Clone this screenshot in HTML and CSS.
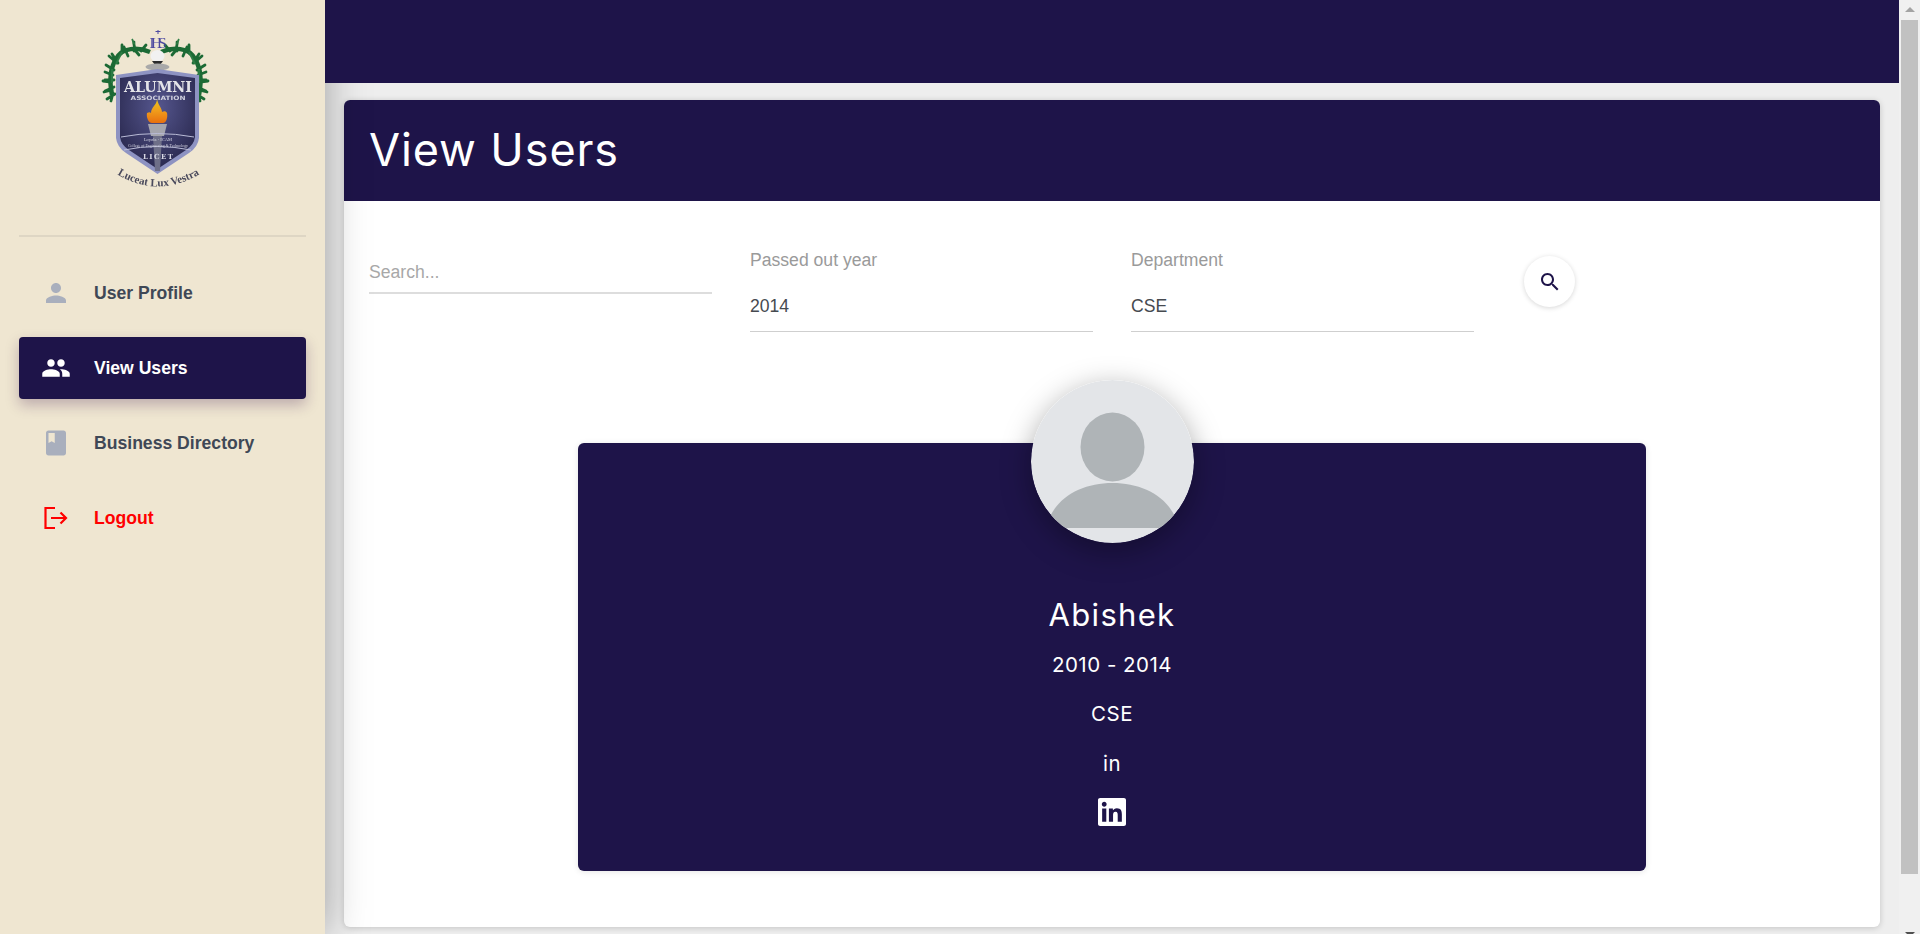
FILE: index.html
```html
<!DOCTYPE html>
<html lang="en">
<head>
  <meta charset="UTF-8" />
  <meta name="viewport" content="width=device-width, initial-scale=1.0"/>
  <title>View Users</title>
  <link rel="stylesheet" href="styles.css">
</head>
<body>
  <div class="app">
    <!-- Sidebar -->
    <aside class="sidebar">
      <div class="logo">
        <svg class="logoImg" viewBox="0 0 130 170" width="130" height="170" role="img" aria-label="Alumni Association">
          <defs>
            <radialGradient id="shieldFill" cx="50%" cy="35%" r="65%">
              <stop offset="0" stop-color="#55568e"/>
              <stop offset="1" stop-color="#2a294f"/>
            </radialGradient>
            <linearGradient id="flameFill" x1="0" y1="0" x2="0" y2="1">
              <stop offset="0" stop-color="#e9c61c"/>
              <stop offset=".45" stop-color="#f0a01c"/>
              <stop offset="1" stop-color="#e8700f"/>
            </linearGradient>
            <g id="branch">
              <path d="M58 27C46 22 30 22 24 34C19 42 17 55 20 70" fill="none" stroke="#1c6a35" stroke-width="4.500"/>
              <path d="M54 20l-5 6M47 30l-5-6M42 17c-1 3 2 5 0 9M36 31l-4-9M30 20l0 8M26 38l-6-9M17 31l8 7M22 45l-8-5M13 47l8 3M22 55l-9 0M11 56l8 1M22 62l-9 4M12 67l8-2M23 69l-8 5M19 76l2-8" fill="none" stroke="#1c6a35" stroke-width="2.800" stroke-linecap="round"/>
              <path d="M40 14c2 3 0 4 3 5M30 27l-6 12M20 44l0 14" fill="none" stroke="#2e7d45" stroke-width="1.800"/>
            </g>
          </defs>
          <use href="#branch" transform="translate(2 0)"/>
          <use href="#branch" transform="translate(129 0) scale(-1 1)"/>
          <text class="logoIhs" x="68" y="23" text-anchor="middle" textLength="17">IHS</text>
          <path d="M68 5v4M65.500 6.500h5" fill="none" stroke="#4d4aa0" stroke-width="1"/>
          <ellipse cx="67.500" cy="31" rx="7" ry="6" fill="#f1f1f1"/>
          <path d="M62 36h11l-3 4h-5z" fill="#2a2a2a"/>
          <ellipse cx="67.500" cy="42" rx="12" ry="3.500" fill="#a9a9a9"/>
          <path d="M26 50L67.500 44L109 50V113Q108 122 99 128L67.500 149L36 128Q27 122 26 113Z" fill="#8e93c2"/>
          <path d="M30 53L67.500 48L105 53V112Q104 120 96 125L67.500 144L39 125Q31 120 30 112Z" fill="url(#shieldFill)"/>
          <text class="logoTitle" x="68" y="67" text-anchor="middle" textLength="68" lengthAdjust="spacingAndGlyphs">ALUMNI</text>
          <text class="logoSub" x="68" y="74.500" text-anchor="middle" textLength="55" lengthAdjust="spacingAndGlyphs">ASSOCIATION</text>
          <path d="M67 74c1 6 5 9 5 13c2-1 4-1 5 1c1 5-1 10-4 10h-11c-3 0-6-5-5-10c2-1 3-1 4 0c0-6 6-8 6-14z" fill="url(#flameFill)"/>
          <path d="M58 99H77L74 111H61Z" fill="#a5a5ad"/>
          <path d="M63 111H72L70 146H65Z" fill="#6e6f88"/>
          <path d="M31 112Q67 105 104 112M34 125Q67 118 101 125" fill="none" stroke="#b9bbd6" stroke-width="1"/>
          <text class="logoBand" x="68" y="116" text-anchor="middle">Loyola - ICAM</text>
          <text class="logoTiny" x="68" y="122" text-anchor="middle" textLength="60" lengthAdjust="spacingAndGlyphs">College of Engineering &amp; Technology</text>
          <text class="logoLicet" x="68" y="134" text-anchor="middle" textLength="30">LICET</text>
          <path id="mottoArc" d="M25 148Q67 175 112 148" fill="none"/>
          <text class="logoMotto"><textPath href="#mottoArc" startOffset="50%" text-anchor="middle">Luceat Lux Vestra</textPath></text>
        </svg>
      </div>

      <div class="divider"></div>

      <nav class="menu">
        <a class="menuItem">
          <svg class="menuIcon" viewBox="0 0 24 24"><path d="M12 12c2.210 0 4-1.790 4-4s-1.790-4-4-4-4 1.790-4 4 1.790 4 4 4zm0 2c-2.670 0-8 1.340-8 4v2h16v-2c0-2.660-5.330-4-8-4z"/></svg>
          <span>User Profile</span>
        </a>
        <a class="menuItem active">
          <svg class="menuIcon" viewBox="0 0 24 24"><path d="M16 11c1.660 0 2.990-1.340 2.990-3S17.660 5 16 5c-1.660 0-3 1.340-3 3s1.340 3 3 3zm-8 0c1.660 0 2.990-1.340 2.990-3S9.660 5 8 5C6.340 5 5 6.340 5 8s1.340 3 3 3zm0 2c-2.330 0-7 1.170-7 3.500V19h14v-2.500c0-2.330-4.670-3.500-7-3.500zm8 0c-.290 0-.620.020-.970.050 1.160.840 1.970 1.970 1.970 3.450V19h6v-2.500c0-2.330-4.670-3.500-7-3.500z"/></svg>
          <span>View Users</span>
        </a>
        <a class="menuItem">
          <svg class="menuIcon" viewBox="0 0 24 24"><path d="M18 2H6c-1.100 0-2 .9-2 2v16c0 1.100.9 2 2 2h12c1.100 0 2-.9 2-2V4c0-1.100-.9-2-2-2zM6 4h5v8l-2.500-1.500L6 12V4z"/></svg>
          <span>Business Directory</span>
        </a>
        <a class="menuItem logout">
          <svg class="menuIcon" viewBox="0 0 30 30"><path d="M14 5H4.500V25H14M10 15H25M19.500 9.500L25 15L19.500 20.500" fill="none" stroke="#ff0000" stroke-width="2.200"/></svg>
          <span>Logout</span>
        </a>
      </nav>
    </aside>

    <!-- Main -->
    <main class="main">
      <div class="topbar"></div>

      <div class="content">
        <section class="card">
          <header class="cardHeader">
            <h1 class="cardTitle">View Users</h1>
          </header>

          <div class="filters">
            <div class="field">
              <input class="searchInput" type="text" placeholder="Search...">
            </div>
            <div class="field">
              <label class="fieldLabel">Passed out year</label>
              <select class="fieldSelect"><option>2014</option></select>
            </div>
            <div class="field">
              <label class="fieldLabel">Department</label>
              <select class="fieldSelect"><option>CSE</option></select>
            </div>
            <button class="searchBtn" aria-label="Search">
              <svg viewBox="0 0 24 24" width="24" height="24"><path d="M15.500 14h-.790l-.280-.270C15.410 12.590 16 11.110 16 9.500 16 5.910 13.090 3 9.500 3S3 5.910 3 9.500 5.910 16 9.500 16c1.610 0 3.090-.590 4.230-1.570l.270.280v.790l5 4.990L20.490 19l-4.990-5zm-6 0C7.010 14 5 11.990 5 9.500S7.010 5 9.500 5 14 7.010 14 9.500 11.990 14 9.500 14z"/></svg>
            </button>
          </div>

          <div class="results">
            <article class="profile">
              <svg class="avatar" viewBox="0 0 163 163">
                <circle cx="81.500" cy="81.500" r="81.500" fill="#e3e5e8"/>
                <ellipse cx="81.500" cy="67" rx="32" ry="34.500" fill="#afb4b7"/>
                <path d="M15 148C22 118 50 103 81.500 103S141 118 148 148Z" fill="#afb4b7"/>
              </svg>
              <div class="profileName">Abishek</div>
              <div class="profileRow">2010 - 2014</div>
              <div class="profileRow">CSE</div>
              <div class="profileRow">in</div>
              <svg class="linkedin" viewBox="0 0 24 24" width="28" height="28"><path d="M20.447 20.452h-3.554v-5.569c0-1.328-.027-3.037-1.852-3.037-1.853 0-2.136 1.445-2.136 2.939v5.667H9.351V9h3.414v1.561h.046c.477-.9 1.637-1.850 3.370-1.850 3.601 0 4.267 2.370 4.267 5.455v6.286zM5.337 7.433c-1.144 0-2.063-.926-2.063-2.065 0-1.138.920-2.063 2.063-2.063 1.140 0 2.064.925 2.064 2.063 0 1.139-.925 2.065-2.064 2.065zm1.782 13.019H3.555V9h3.564v11.452zM22.225 0H1.771C.792 0 0 .774 0 1.729v20.542C0 23.227.792 24 1.771 24h20.451C23.200 24 24 23.227 24 22.271V1.729C24 .774 23.200 0 22.222 0h.003z"/></svg>
            </article>
          </div>
        </section>
      </div>
    </main>

    <!-- Scrollbar -->
    <div class="scrollbar">
      <div class="arrowUp"></div>
      <div class="thumb"></div>
      <div class="arrowDown"></div>
    </div>
  </div>
</body>
</html>
```

FILE: styles.css
```css
html, body {
  margin: 0;
  padding: 0;
  height: 934px;
  overflow: hidden;
}

body {
  background-color: #eeeeee;
  color: #374151;
  font-family: "Liberation Sans", Arial, sans-serif;
}

.app {
  display: flex;
  height: 934px;
  overflow: hidden;
}

/* Sidebar */
.sidebar {
  width: 325px;
  flex: none;
  background-color: #efe6d1;
  box-shadow: 0 0 40px rgba(0, 0, 0, 0.34);
  position: relative;
  z-index: 1;
}

.logo {
  height: 235px;
  padding-top: 25px;
  padding-left: 90px;
  box-sizing: border-box;
}

.logoImg {
  display: block;
  filter: blur(0.35px);
}

.logoIhs {
  font-family: "Liberation Serif", serif;
  font-size: 15px;
  fill: #4d4aa0;
}

.logoTitle {
  font-family: "DejaVu Serif", serif;
  font-weight: bold;
  font-size: 14px;
  fill: #e3e3e8;
}

.logoSub {
  font-family: "DejaVu Sans", sans-serif;
  font-weight: bold;
  font-size: 6px;
  fill: #cfd0de;
}

.logoBand {
  font-family: "Liberation Serif", serif;
  font-size: 4.500px;
  fill: #d8d8e4;
}

.logoTiny {
  font-family: "Liberation Serif", serif;
  font-size: 3.500px;
  fill: #d8d8e4;
}

.logoLicet {
  font-family: "DejaVu Serif", serif;
  font-weight: bold;
  font-size: 7px;
  fill: #d8d8e4;
}

.logoMotto {
  font-family: "Liberation Serif", serif;
  font-weight: bold;
  font-size: 11px;
  fill: #4a4a5c;
}

.divider {
  height: 2px;
  margin: 0 19px;
  background-color: #ded6c4;
}

.menu {
  display: flex;
  flex-direction: column;
  gap: 13px;
  padding: 25px 19px 0;
}

.menuItem {
  display: flex;
  align-items: center;
  height: 62px;
  padding-left: 22px;
  border-radius: 4px;
  font-size: 17.600px;
  font-weight: bold;
  color: #3f4856;
  cursor: pointer;
}

.menuIcon {
  width: 30px;
  height: 30px;
  margin-right: 23px;
  fill: #a9afbd;
}

.menuItem.active {
  background-color: #1e1449;
  color: #fff;
  box-shadow: 0 6px 14px rgba(60, 20, 80, 0.28);
}

.menuItem.active .menuIcon {
  fill: #fff;
}

.menuItem.logout {
  color: #ff0000;
}

/* Main */
.main {
  flex: 1;
  min-width: 0;
}

.topbar {
  height: 83px;
  background-color: #1e1449;
  position: relative;
  z-index: 2;
}

.content {
  padding: 17px 19px 0;
}

.card {
  height: 827px;
  background: #fff;
  border-radius: 6px;
  box-shadow: 0 1px 6px rgba(0, 0, 0, 0.18);
  overflow: hidden;
}

.cardHeader {
  height: 101px;
  display: flex;
  align-items: center;
  padding-left: 25px;
  padding-bottom: 2px;
  box-sizing: border-box;
  background-color: #1e1449;
}

.cardTitle {
  margin: 0;
  font-family: Inter, "Noto Sans", sans-serif;
  font-size: 45px;
  font-weight: 400;
  letter-spacing: 0.9px;
  color: #fff;
}

.filters {
  display: flex;
  align-items: flex-start;
  gap: 38px;
  padding: 47px 25px 0;
}

.field {
  width: 343px;
  flex: none;
}

.searchInput {
  display: block;
  width: 100%;
  box-sizing: border-box;
  height: 46px;
  border: none;
  border-bottom: 2px solid #dddddd;
  outline: none;
  padding: 5px 0 0;
  font-family: inherit;
  font-size: 17.600px;
  color: #374151;
}

.searchInput::placeholder {
  color: #a8a8a8;
}

.fieldLabel {
  display: block;
  height: 24px;
  line-height: 24px;
  font-size: 17.600px;
  color: #9a9a9a;
}

.fieldSelect {
  display: block;
  width: 100%;
  height: 60px;
  border: none;
  border-bottom: 1px solid #cfcfcf;
  background: none;
  outline: none;
  padding: 8px 0 0;
  appearance: none;
  font-family: inherit;
  font-size: 17.600px;
  color: #464a50;
}

.searchBtn {
  width: 51px;
  height: 51px;
  flex: none;
  margin: 8px 0 0 12px;
  padding: 0;
  display: flex;
  align-items: center;
  justify-content: center;
  border: none;
  border-radius: 50%;
  background: #fff;
  box-shadow: 0 1px 5px rgba(0, 0, 0, 0.16);
  fill: #1e1449;
}

/* Profile card */
.results {
  display: flex;
  justify-content: center;
  padding-top: 111px;
}

.profile {
  width: 1068px;
  height: 428px;
  display: flex;
  flex-direction: column;
  align-items: center;
  background-color: #1e1449;
  border-radius: 6px;
  color: #fff;
  font-family: Inter, "Noto Sans", sans-serif;
  box-shadow: 0 1px 6px rgba(0, 0, 0, 0.1);
}

.avatar {
  width: 163px;
  height: 163px;
  margin-top: -63px;
  margin-bottom: 47px;
  border-radius: 50%;
  overflow: hidden;
  box-shadow: 0 8px 30px rgba(0, 0, 0, 0.35);
}

.profileName {
  height: 49.500px;
  line-height: 49.500px;
  font-size: 31px;
  letter-spacing: 1.300px;
}

.profileRow {
  height: 49.500px;
  line-height: 49.500px;
  font-size: 20.500px;
  letter-spacing: 0.500px;
}

.linkedin {
  margin-top: 10px;
  fill: #fff;
}

/* Scrollbar */
.scrollbar {
  width: 21px;
  flex: none;
  background-color: #f0f0f0;
  position: relative;
  z-index: 2;
}

.arrowUp {
  width: 0;
  height: 0;
  margin: 7px auto 8px;
  border-left: 5px solid transparent;
  border-right: 5px solid transparent;
  border-bottom: 5px solid #a3a3a3;
}

.thumb {
  width: 17px;
  height: 854px;
  margin-left: 2px;
  background-color: #c1c1c1;
}

.arrowDown {
  width: 0;
  height: 0;
  margin: 58px auto 0;
  border-left: 5px solid transparent;
  border-right: 5px solid transparent;
  border-top: 5px solid #505050;
}
```
